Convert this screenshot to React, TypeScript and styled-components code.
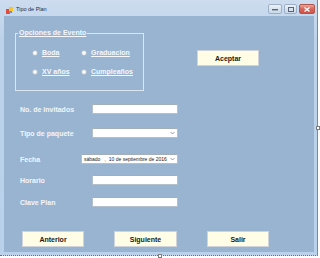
import React from "react";
import styled, { createGlobalStyle } from "styled-components";

const Global = createGlobalStyle`
  html, body { margin: 0; padding: 0; background: #ffffff; }
  body { font-family: "Liberation Sans", Arial, sans-serif; }
  * { box-sizing: border-box; }
`;

const Page = styled.div`
  position: relative;
  width: 320px;
  height: 258px;
  overflow: hidden;
  background: #ffffff;
`;

const Window = styled.div`
  width: 318px;
  height: 256px;
  display: flex;
  flex-direction: column;
  background: linear-gradient(#cddcee, #bcd2ea 40px, #b9d1ea);
  border-right: 1px solid #7f8791;
  border-bottom: 1px dotted #6a7078;
`;

const TitleBar = styled.div`
  height: 16px;
  flex: none;
  display: flex;
  align-items: flex-start;
  padding: 0 2px 0 6px;
`;

const TitleIcon = styled.svg`
  width: 7px;
  height: 7px;
  margin-top: 7px;
  flex: none;
`;

const TitleText = styled.span`
  margin: 6px 0 0 3px;
  font-size: 5.5px;
  line-height: 7px;
  color: #1e2a3a;
`;

const Controls = styled.div`
  margin: 4px 0 0 auto;
  display: flex;
  gap: 2px;
`;

const CtrlButton = styled.div<{ $w: number; $close?: boolean }>`
  width: ${(p) => p.$w}px;
  height: 10px;
  border-radius: 2px;
  display: flex;
  align-items: center;
  justify-content: center;
  border: 1px solid ${(p) => (p.$close ? "#b0554a" : "#9db0c8")};
  background: ${(p) =>
    p.$close
      ? "linear-gradient(#eaa598, #d8645a 50%, #cf5548)"
      : "linear-gradient(#edf2f8, #d8e2ee 50%, #ccd9ea)"};
`;

const Body = styled.div`
  flex: 1;
  display: flex;
  padding: 0 3px 3px 4px;
`;

const Client = styled.div`
  width: 310px;
  height: 236px;
  background: #99b4d1;
  padding: 13px 0 0 11px;
  display: flex;
  flex-direction: column;
`;

const TopRow = styled.div`
  display: flex;
  align-items: flex-start;
`;

const GroupBox = styled.fieldset`
  margin: 0;
  width: 129px;
  height: 62px;
  padding: 0 0 0 2px;
  border: 1px solid #dbe4ef;
  min-width: 0;
`;

const GroupLegend = styled.legend`
  padding: 0 1px;
  font-size: 7px;
  line-height: 8px;
  font-weight: bold;
  color: #f4f7fb;
  text-decoration: underline;
`;

const RadioGrid = styled.div`
  display: grid;
  grid-template-columns: 49px auto;
  row-gap: 10px;
  margin: 11px 0 0 14px;
`;

const RadioItem = styled.label`
  display: flex;
  align-items: center;
  gap: 4px;
  height: 9px;
  font-size: 7px;
  font-weight: bold;
  color: #f4f7fb;
  text-decoration: underline;
`;

const RadioDot = styled.span`
  width: 6px;
  height: 6px;
  border-radius: 50%;
  background: radial-gradient(circle at 40% 35%, #ffffff, #eef1f5);
  border: 1px solid #b3bfcc;
  flex: none;
`;

const FormButton = styled.button<{ $w?: number }>`
  width: ${(p) => p.$w ?? 62}px;
  height: 16px;
  padding: 0;
  margin: 0;
  background: #fffde6;
  border: 1px solid #cfd4da;
  font-family: "Liberation Sans", Arial, sans-serif;
  font-size: 7px;
  font-weight: bold;
  color: #1a1a1a;
  display: flex;
  align-items: center;
  justify-content: center;
`;

const AcceptButton = styled(FormButton)`
  margin: 21px 0 0 53px;
`;

const Form = styled.div`
  display: flex;
  flex-direction: column;
  margin-left: 5px;
`;

const Row = styled.div<{ $top: number }>`
  display: grid;
  grid-template-columns: 61px 97px;
  align-items: center;
  height: 10px;
  margin-top: ${(p) => p.$top}px;
`;

const Label = styled.span`
  font-size: 7px;
  font-weight: bold;
  color: #f2f6fa;
  white-space: nowrap;
`;

const TextBox = styled.div`
  justify-self: end;
  width: 86px;
  height: 10px;
  background: #ffffff;
  border: 1px solid #b4bfcc;
  border-top-color: #a3aebb;
`;

const Combo = styled(TextBox)<{ $wide?: boolean }>`
  width: ${(p) => (p.$wide ? 97 : 86)}px;
  display: flex;
  align-items: center;
  padding: 0 2px 0 2px;
`;

const ComboText = styled.span`
  flex: 1;
  font-size: 5px;
  line-height: 8px;
  color: #222;
  white-space: pre;
  overflow: hidden;
`;

const Chevron = styled.svg`
  width: 5px;
  height: 4px;
  flex: none;
`;

const ButtonRow = styled.div`
  display: flex;
  gap: 30px;
  margin: 24px 0 0 7px;
`;

const Handle = styled.div<{ $x: number; $y: number }>`
  position: absolute;
  left: ${(p) => p.$x}px;
  top: ${(p) => p.$y}px;
  width: 4px;
  height: 4px;
  background: #ffffff;
  border: 1px solid #7a7f86;
`;

const ChevronIcon = () => (
  <Chevron viewBox="0 0 5 4">
    <path d="M0.6 1 L2.5 3 L4.4 1" fill="none" stroke="#7d8794" strokeWidth="0.8" />
  </Chevron>
);

export default function App() {
  return (
    <>
      <Global />
      <Page>
        <Window>
          <TitleBar>
            <TitleIcon viewBox="0 0 7 7">
              <rect x="0" y="2" width="4" height="5" fill="#e24a3b" />
              <rect x="3" y="0" width="4" height="4" fill="#f4c430" />
              <rect x="3" y="4" width="3" height="2" fill="#6b8fd6" />
            </TitleIcon>
            <TitleText>Tipo de Plan</TitleText>
            <Controls>
              <CtrlButton $w={14}>
                <svg width="6" height="3" viewBox="0 0 6 3">
                  <rect x="0" y="1" width="6" height="1.4" fill="#56657a" />
                </svg>
              </CtrlButton>
              <CtrlButton $w={13}>
                <svg width="6" height="5" viewBox="0 0 6 5">
                  <rect x="0.5" y="0.5" width="5" height="4" fill="none" stroke="#56657a" strokeWidth="1" />
                </svg>
              </CtrlButton>
              <CtrlButton $w={16} $close>
                <svg width="6" height="5" viewBox="0 0 6 5">
                  <path d="M0.5 0.5 L5.5 4.5 M5.5 0.5 L0.5 4.5" stroke="#ffffff" strokeWidth="1.3" />
                </svg>
              </CtrlButton>
            </Controls>
          </TitleBar>
          <Body>
            <Client>
              <TopRow>
                <GroupBox>
                  <GroupLegend>Opciones de Evento</GroupLegend>
                  <RadioGrid>
                    <RadioItem><RadioDot />Boda</RadioItem>
                    <RadioItem><RadioDot />Graduacion</RadioItem>
                    <RadioItem><RadioDot />XV años</RadioItem>
                    <RadioItem><RadioDot />Cumpleaños</RadioItem>
                  </RadioGrid>
                </GroupBox>
                <AcceptButton>Aceptar</AcceptButton>
              </TopRow>
              <Form>
                <Row $top={13}>
                  <Label>No. de invitados</Label>
                  <TextBox />
                </Row>
                <Row $top={14}>
                  <Label>Tipo de paquete</Label>
                  <Combo>
                    <ComboText />
                    <ChevronIcon />
                  </Combo>
                </Row>
                <Row $top={16}>
                  <Label>Fecha</Label>
                  <Combo $wide>
                    <ComboText>{"sábado   ,  10 de septiembre de 2016"}</ComboText>
                    <ChevronIcon />
                  </Combo>
                </Row>
                <Row $top={11}>
                  <Label>Horario</Label>
                  <TextBox />
                </Row>
                <Row $top={12}>
                  <Label>Clave Plan</Label>
                  <TextBox />
                </Row>
              </Form>
              <ButtonRow>
                <FormButton $w={62}>Anterior</FormButton>
                <FormButton $w={63}>Siguiente</FormButton>
                <FormButton $w={62}>Salir</FormButton>
              </ButtonRow>
            </Client>
          </Body>
        </Window>
        <Handle $x={316} $y={126} />
        <Handle $x={158} $y={254} />
      </Page>
    </>
  );
}
